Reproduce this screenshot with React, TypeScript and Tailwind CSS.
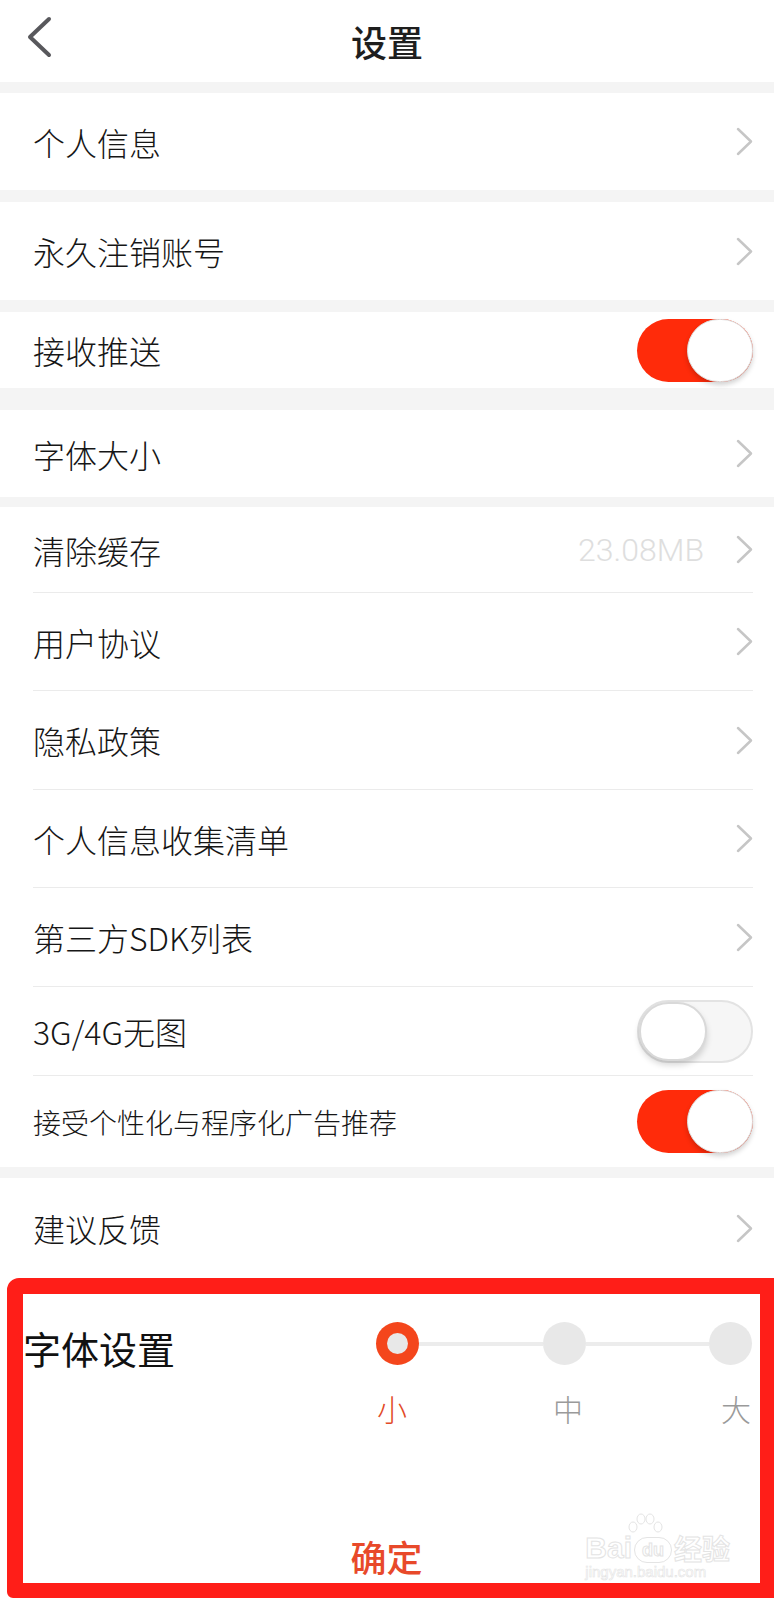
import React from 'react';

const Chevron = () => (
  <svg width="17" height="29" viewBox="0 0 17 29" fill="none" className="shrink-0">
    <polyline points="2,2 15,14.5 2,27" stroke="#c6c6c6" strokeWidth="2.5" strokeLinecap="round" strokeLinejoin="round" />
  </svg>
);

const Toggle = ({ on }: { on: boolean }) =>
  on ? (
    <div className="w-[116px] h-[63px] rounded-full bg-[#ff2b0a] flex justify-end shrink-0">
      <div className="w-[66px] h-[63px] rounded-full bg-white border border-[#dedede] shadow-[0_3px_5px_rgba(0,0,0,0.18)]" />
    </div>
  ) : (
    <div className="w-[116px] h-[63px] rounded-full bg-[#f6f6f6] border-2 border-[#e3e3e3] flex justify-start shrink-0">
      <div className="w-[68px] h-[59px] rounded-full bg-white border-2 border-[#d9d9d9] shadow-[0_4px_6px_rgba(0,0,0,0.16)]" />
    </div>
  );

const Gap = ({ h }: { h: string }) => <div className={`${h} bg-[#f4f4f4]`} />;

type RowProps = {
  label: string;
  h: string;
  line?: boolean;
  small?: boolean;
  right?: React.ReactNode;
};

const Row = ({ label, h, line, small, right }: RowProps) => (
  <div className="bg-white pl-[33px] pr-[21px]">
    <div className={`${h} flex items-center justify-between ${line ? 'border-b border-[#ebebeb]' : ''}`}>
      <span className={`${small ? 'text-[28px]' : 'text-[32px]'} font-light text-[#161616] leading-none`}>{label}</span>
      {right ?? <Chevron />}
    </div>
  </div>
);

const Watermark = () => (
  <div className="absolute right-[30px] bottom-[2px] flex flex-col items-start pointer-events-none">
    <div className="relative flex items-end text-white font-['Liberation_Sans',sans-serif] font-bold [-webkit-text-stroke:1px_#e4e4e4]">
      <span className="text-[30px] leading-[30px]">Bai</span>
      <span className="relative mx-[2px] w-[38px] h-[26px] rounded-full border border-[#e4e4e4] text-[18px] leading-[24px] text-center">du</span>
      <svg width="40" height="22" viewBox="0 0 40 22" className="absolute left-[40px] -top-[20px]" fill="none" stroke="#e4e4e4" strokeWidth="1">
        <ellipse cx="8" cy="14" rx="4" ry="5" />
        <ellipse cx="16" cy="6" rx="4" ry="5" />
        <ellipse cx="25" cy="6" rx="4" ry="5" />
        <ellipse cx="33" cy="14" rx="4" ry="5" />
      </svg>
      <span className="text-[28px] leading-[30px] font-['Noto_Sans_CJK_SC',sans-serif]">经验</span>
    </div>
    <span className="text-[15px] leading-[18px] text-white font-['Liberation_Sans',sans-serif] [-webkit-text-stroke:0.6px_#e4e4e4]">jingyan.baidu.com</span>
  </div>
);

export default function App() {
  return (
    <div className="w-[774px] h-[1600px] bg-white overflow-hidden font-['Noto_Sans_CJK_SC','Noto_Sans',sans-serif]">
      {/* Header */}
      <div className="h-[82px] grid grid-cols-[1fr_auto_1fr] items-center">
        <div className="pl-[26px] pb-[8px]">
          <svg width="26" height="42" viewBox="0 0 26 42" fill="none">
            <polyline points="23,3 4,21 23,39" stroke="#58585c" strokeWidth="4" strokeLinecap="round" strokeLinejoin="round" />
          </svg>
        </div>
        <span className="text-[36px] leading-none font-medium text-[#1e1e1e]">设置</span>
        <div />
      </div>

      <Gap h="h-[11px]" />
      <Row label="个人信息" h="h-[97px]" />
      <Gap h="h-[12px]" />
      <Row label="永久注销账号" h="h-[98px]" />
      <Gap h="h-[12px]" />
      <Row label="接收推送" h="h-[76px]" right={<Toggle on />} />
      <Gap h="h-[22px]" />
      <Row label="字体大小" h="h-[87px]" />
      <Gap h="h-[10px]" />

      <Row
        label="清除缓存"
        h="h-[86px]"
        line
        right={
          <div className="flex items-center gap-[32px]">
            <span className="font-['Roboto',sans-serif] font-light text-[32px] leading-none text-[#dedede]">23.08MB</span>
            <Chevron />
          </div>
        }
      />
      <Row label="用户协议" h="h-[98px]" line />
      <Row label="隐私政策" h="h-[99px]" line />
      <Row label="个人信息收集清单" h="h-[98px]" line />
      <Row label="第三方SDK列表" h="h-[99px]" line />
      <Row label="3G/4G无图" h="h-[89px]" line right={<Toggle on={false} />} />
      <Row label="接受个性化与程序化广告推荐" h="h-[91px]" small right={<Toggle on />} />
      <Gap h="h-[11px]" />
      <Row label="建议反馈" h="h-[100px]" />

      {/* Font size sheet (highlighted) */}
      <div className="ml-[7px] h-[320px] border-[16px] border-r-[14px] border-b-[15px] border-[#ff1e18] rounded-tl-[12px] rounded-bl-[6px] bg-white">
        <div className="relative h-full flex flex-col">
          <div className="flex items-start pt-[28px]">
            <span className="flex-1 text-[38px] leading-[43px] pt-[4px] text-[#111]">字体设置</span>
            <div className="w-[376px] mr-[8px] flex flex-col">
              <div className="flex items-center">
                <div className="w-[43px] h-[43px] rounded-full bg-[#f4461c] flex items-center justify-center shrink-0">
                  <div className="w-[21px] h-[21px] rounded-full bg-[#e8e8e8]" />
                </div>
                <div className="flex-1 h-[4px] bg-[#ececec]" />
                <div className="w-[43px] h-[43px] rounded-full bg-[#e8e8e8] shrink-0" />
                <div className="flex-1 h-[4px] bg-[#ececec]" />
                <div className="w-[43px] h-[43px] rounded-full bg-[#e8e8e8] shrink-0" />
              </div>
              <div className="flex justify-between mt-[28px] pl-[1px] pr-[1px] text-[30px] leading-[30px] font-light">
                <span className="text-[#e24a28]">小</span>
                <span className="text-[#9a9a9a] pl-[8px]">中</span>
                <span className="text-[#9a9a9a]">大</span>
              </div>
            </div>
          </div>
          <div className="mt-auto pb-[9px] pr-[10px] flex justify-center">
            <span className="text-[36px] leading-[36px] font-medium text-[#e8492a]">确定</span>
          </div>
          <Watermark />
        </div>
      </div>
    </div>
  );
}
